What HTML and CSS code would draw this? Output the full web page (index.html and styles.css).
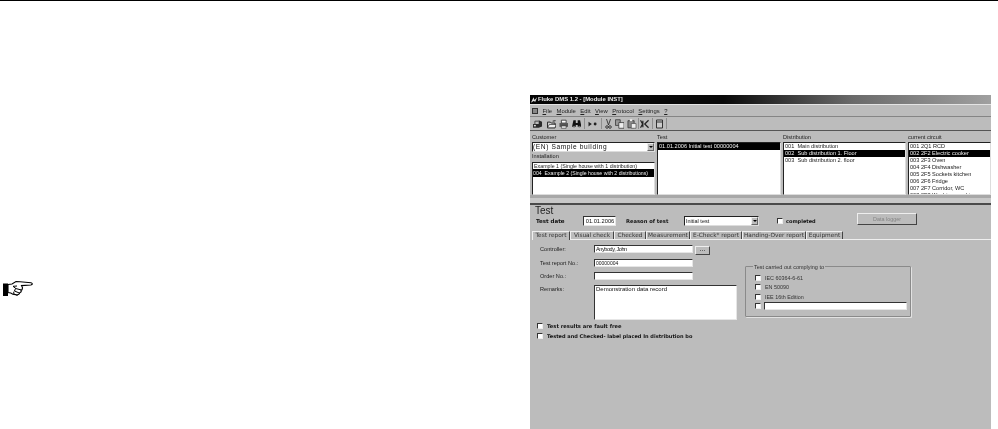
FILE: index.html
```html
<!DOCTYPE html>
<html lang="en">
<head>
<meta charset="utf-8">
<title>Fluke DMS</title>
<link rel="stylesheet" href="styles.css">
</head>
<body>
<div class="rule"></div>
<div class="page">
  <div class="margin">
    <svg class="hand" viewBox="0 0 30 17" width="30" height="17">
      <path d="M0 3.500h5v12.500H0z" fill="#000"/>
      <path d="M5 4.500l4-.5 4-2.500 4 .3 11 .9c1.800.4 1.800 2-.2 2.300l-9.300.6 1 2.200-.5 2-1 .3.200 1.700-1.400 1-1 1.400-2 .8-4-.8-2-1.200-2.800-.5z" fill="#fff" stroke="#000" stroke-width="1.100"/>
      <path d="M14 6l-4 .3 3 2.300 5.500 1.400M12.500 8.500l-1 2.500 5.500 2.300M11 11.500l-.5 2 4 2" fill="none" stroke="#000" stroke-width="1"/>
    </svg>
  </div>
  <div class="window">
    <div class="titlebar">
      <svg class="appicon" viewBox="0 0 9 8" width="8" height="8"><path d="M1 7l3-6 1 3 3-3-2 5-2-1z" fill="#ddd"/></svg>
      <span>Fluke DMS 1.2 - [Module INST]</span>
    </div>
    <div class="menubar">
      <span class="menuicon"></span>
      <span><u>F</u>ile</span><span><u>M</u>odule</span><span><u>E</u>dit</span><span><u>V</u>iew</span><span><u>P</u>rotocol</span><span><u>S</u>ettings</span><span><u>?</u></span>
    </div>
    <div class="toolbar">
      <svg class="tool" viewBox="0 0 10 10"><path d="M0 5h6v4H0zM6 1l3.500 1.500v5L6 9z" fill="#2a2a2a"/><path d="M1 6h2v1.500H1z" fill="#ddd"/><path d="M2 5V2h4" fill="none" stroke="#444"/></svg>
      <svg class="tool t-gap4" viewBox="0 0 10 10"><path d="M.5 3h3l1 1h4v5h-8z" fill="#ccc" stroke="#222"/><path d="M.5 9l2-3.500h7L8.500 9z" fill="#eee" stroke="#222" stroke-width=".7"/><path d="M6 2l3-.5" stroke="#222"/></svg>
      <svg class="tool t-gap3" viewBox="0 0 10 10"><path d="M2.500 1h5v3h-5z" fill="#fff" stroke="#222" stroke-width=".8"/><path d="M.5 4h9v4h-9z" fill="#555"/><path d="M2.500 7h5v2.500h-5z" fill="#eee" stroke="#222" stroke-width=".6"/></svg>
      <svg class="tool t-gap3" viewBox="0 0 10 10"><path d="M1.500 1h2.500v3h2V1h2.500L10 8H6V6H4v2H0z" fill="#111"/><circle cx="2.200" cy="7.800" r="1" fill="#777"/><circle cx="7.800" cy="7.800" r="1" fill="#777"/></svg>
      <i class="sep"></i>
      <svg class="tool" viewBox="0 0 10 10"><path d="M.5 2.500l3.500 2.500-3.500 2.500z" fill="#222"/><circle cx="7.500" cy="5" r="1.500" fill="#222"/></svg>
      <i class="sep"></i>
      <svg class="tool t-sm" viewBox="0 0 7 10"><path d="M1.500 0l2 6M5.500 0l-2 6" fill="none" stroke="#222" stroke-width=".8"/><circle cx="2" cy="8" r="1.300" fill="none" stroke="#222" stroke-width=".8"/><circle cx="5" cy="8" r="1.300" fill="none" stroke="#222" stroke-width=".8"/></svg>
      <svg class="tool t-gap3" viewBox="0 0 10 10"><path d="M.5 .5h5v6h-5z" fill="#999" stroke="#333" stroke-width=".8"/><path d="M4 3.500h5.500v6H4z" fill="#eee" stroke="#333" stroke-width=".8"/></svg>
      <svg class="tool t-gap3" viewBox="0 0 10 10"><path d="M1 1.500h6.500V9H1z" fill="#888" stroke="#333" stroke-width=".8"/><path d="M3 0h2.500v2H3z" fill="#eee"/><path d="M4.500 4.500h5v5h-5z" fill="#eee" stroke="#555" stroke-width=".8"/></svg>
      <i class="sep s-tight"></i>
      <svg class="tool" viewBox="0 0 10 10"><path d="M.5 1l2.200 4L.5 9M3 1.500v7M9 1L5 5l4 4" fill="none" stroke="#222" stroke-width="1.300"/></svg>
      <i class="sep"></i>
      <svg class="tool t-sm" viewBox="0 0 7 10"><path d="M.5 1h6v8h-6z" fill="#ccc" stroke="#333"/><path d="M.5 3h6" stroke="#333"/></svg>
      <i class="sep"></i>
    </div>
    <div class="selectors">
      <div class="col col-customer">
        <label>Customer</label>
        <div class="combo c-customer"><span>(EN) Sample building</span><b class="drop"></b></div>
        <label class="second">Installation</label>
        <div class="list grow">
          <div class="item tiny">Example 1 (Single house with 1 distribution)</div>
          <div class="item on tall">004&nbsp; Example 2 (Single house with 2 distributions)</div>
        </div>
      </div>
      <div class="col col-test">
        <label>Test</label>
        <div class="list grow"><div class="item on">01.01.2006 Initial test 00000004</div></div>
      </div>
      <div class="col col-dist">
        <label>Distribution</label>
        <div class="list grow">
          <div class="item">001&nbsp; Main distribution</div>
          <div class="item on">002&nbsp; Sub distribution 1. Floor</div>
          <div class="item">003&nbsp; Sub distribution 2. floor</div>
        </div>
      </div>
      <div class="col col-circuit">
        <label>current circuit</label>
        <div class="list grow">
          <div class="item">001 2Q1 RCD</div>
          <div class="item on">002 2F2 Electric cooker</div>
          <div class="item">003 2F3 Oven</div>
          <div class="item">004 2F4 Dishwasher</div>
          <div class="item">005 2F5 Sockets kitchen</div>
          <div class="item">006 2F6 Fridge</div>
          <div class="item">007 2F7 Corridor, WC</div>
          <div class="item">008 2F8 Washing machine</div>
        </div>
      </div>
    </div>
    <div class="divider"></div>
    <div class="module">
      <h1>Test</h1>
      <div class="testline">
        <strong class="l-date">Test date</strong>
        <div class="field f-date">01.01.2006</div>
        <strong class="l-reason">Reason of test</strong>
        <div class="combo f-reason"><span>Initial test</span><b class="drop"></b></div>
        <span class="check c-completed"></span>
        <strong class="l-completed">completed</strong>
        <div class="logger">Data logger</div>
      </div>
      <div class="tabs">
        <span class="tab active t1">Test report</span>
        <span class="tab t2">Visual check</span>
        <span class="tab t3">Checked</span>
        <span class="tab t4">Measurement</span>
        <span class="tab t5">E-Check* report</span>
        <span class="tab t6">Handing-Over report</span>
        <span class="tab t7">Equipment</span>
      </div>
      <div class="report">
        <div class="formcol">
          <div class="formrow"><label>Controller:</label><div class="field wide name">Anybody, John</div><div class="dots">...</div></div>
          <div class="formrow"><label>Test report No.:</label><div class="field wide num">00000004</div></div>
          <div class="formrow"><label>Order No.:</label><div class="field wide"></div></div>
          <div class="formrow last"><label>Remarks:</label><div class="field area">Demonstration data record</div></div>
          <div class="optline"><span class="check"></span><strong>Test results are fault free</strong></div>
          <div class="optline"><span class="check"></span><strong class="narrow">Tested and Checked- label placed In distribution bo</strong></div>
        </div>
        <fieldset class="comply">
          <legend>Test carried out complying to</legend>
          <div class="cline"><span class="check"></span><span>IEC 60364-6-61</span></div>
          <div class="cline"><span class="check"></span><span>EN 50090</span></div>
          <div class="cline"><span class="check"></span><span>IEE 16th Edition</span></div>
          <div class="cline"><span class="check"></span><div class="field other"></div></div>
        </fieldset>
      </div>
    </div>
  </div>
</div>
</body>
</html>
```
FILE: styles.css
```css
* { box-sizing: border-box; }
html, body { margin: 0; padding: 0; background: #fff; height: 429px; overflow: hidden; }
body { font-family: "Liberation Sans", Arial, sans-serif; color: #111; }
.rule { height: 1px; background: #000; }
.page { display: flex; height: 428px; }
.margin { width: 530px; flex: none; padding: 279px 0 0 3px; }
.hand { display: block; }
.window { width: 461px; flex: none; margin-top: 94px; background: #bcbcbc; display: flex; flex-direction: column; filter: blur(.3px); }
.titlebar { height: 10px; border-bottom: 1px solid #e4e4e4; background: linear-gradient(90deg, #050505 0, #0a0a0a 42%, #6a6a6a 70%, #a0a0a0 100%); color: #eee; font-weight: bold; font-size: 5.900px; line-height: 9px; display: flex; align-items: center; padding-left: 0; }
.appicon { flex: none; }
.menubar { height: 12px; display: flex; align-items: center; gap: 4.500px; padding-left: 2px; border-bottom: 1px solid #858585; font-size: 5.900px; color: #222; }
.menuicon { width: 6px; height: 6px; border: 1px solid #333; background: #888; margin-right: 0; }
.toolbar { height: 14px; display: flex; align-items: center; padding-left: 3px; border-bottom: 1px solid #555; }
.tool { width: 9.500px; height: 10px; flex: none; }
.t-gap4 { margin-left: 4px; }
.t-gap3 { margin-left: 3px; }
.t-sm { width: 7px; }
.sep { width: 1px; height: 11px; background: #8e8e8e; margin: 0 3px; flex: none; }
.s-tight { margin: 0 1px; }
.selectors { height: 72px; display: grid; grid-template-columns: 125px 126px 125px 83px; padding: 3px 0 0 2px; background: linear-gradient(180deg, #bcbcbc 0, #bcbcbc 64px, #a8a8a8 64px, #a8a8a8 67px, #c8c8c8 67px, #c8c8c8 100%); }
.col { display: flex; flex-direction: column; height: 61px; padding-right: 2px; }
.col-circuit { padding-right: 0; }
.col label { height: 8px; line-height: 7px; font-size: 5.600px; color: #222; }
.col .second { height: 9px; line-height: 8px; margin-bottom: 1px; }
.combo { height: 10px; flex: none; background: #fff; border: 1px solid #222; border-right-color: #ddd; border-bottom-color: #ddd; display: flex; align-items: center; justify-content: space-between; padding-left: 1px; line-height: 8px; white-space: nowrap; overflow: hidden; }
.c-customer { font-size: 6.600px; letter-spacing: .6px; padding-left: 0; }
.drop { width: 7px; height: 8px; flex: none; background: #bcbcbc; border: 1px solid #666; border-top-color: #eee; border-left-color: #eee; position: relative; }
.drop::after { content: ""; position: absolute; left: 1px; top: 2px; border: 2px solid transparent; border-top: 2px solid #000; border-bottom: 0; }
.list { background: #fff; border: 1px solid #222; border-right-color: #ddd; border-bottom-color: #ddd; overflow: hidden; }
.grow { flex: 1; min-height: 0; }
.item { height: 7px; line-height: 7px; font-size: 5.600px; padding-left: 1px; white-space: nowrap; overflow: hidden; color: #222; }
.item.tiny { font-size: 5.300px; height: 6px; line-height: 6px; }
.item.tall { height: 8px; line-height: 8px; font-size: 5.200px; padding-left: 0; }
.item.on { background: #000; color: #eee; }
.divider { height: 2px; background: #4a4a4a; }
.module { flex: 1; padding: 0 0 0 2px; background: #bcbcbc; }
h1 { margin: 1px 0 0 3px; font-size: 10px; line-height: 10px; font-weight: normal; color: #222; }
.testline { display: flex; align-items: center; height: 10px; margin-left: 4px; }
strong { font-family: "DejaVu Sans", Verdana, sans-serif; font-weight: bold; font-size: 5.200px; white-space: nowrap; color: #111; }
.narrow { font-size: 5.030px; }
.field { background: #fff; border: 1px solid #333; border-right-color: #e6e6e6; border-bottom-color: #e6e6e6; font-size: 5.500px; line-height: 6px; white-space: nowrap; padding-left: 1px; }
.l-date { width: 47px; font-size: 5.500px; }
.f-date { width: 33px; height: 10px; flex: none; text-align: center; font-size: 5.700px; line-height: 8px; }
.l-reason { margin-left: 10px; width: 58px; }
.f-reason { width: 75px; font-size: 5.500px; }
.check { width: 6px; height: 6px; flex: none; background: #fff; border: 1px solid #333; border-right-color: #eee; border-bottom-color: #eee; }
.c-completed { margin-left: 18px; }
.l-completed { margin-left: 3px; width: 71px; font-size: 5px; }
.logger { width: 60px; height: 12px; flex: none; align-self: flex-start; margin-top: -3px; background: #bcbcbc; border: 1px solid #eee; border-right-color: #444; border-bottom-color: #444; text-align: center; font-size: 5.400px; line-height: 10px; color: #858585; }
.tabs { display: flex; height: 9px; margin-top: 5px; border-bottom: 1px solid #efefef; }
.tab { height: 8px; line-height: 7px; text-align: center; font-family: "DejaVu Sans", sans-serif; font-size: 5.800px; color: #333; background: #bcbcbc; border-top: 1px solid #eee; border-left: 1px solid #eee; border-right: 1px solid #444; white-space: nowrap; overflow: hidden; }
.tab.active { height: 9px; position: relative; z-index: 1; }
.t1 { width: 38px; } .t2 { width: 44px; } .t3 { width: 32px; } .t4 { width: 44px; } .t5 { width: 52px; } .t6 { width: 64px; } .t7 { width: 37px; }
.report { display: flex; padding: 5px 0 0 0; }
.formcol { width: 213px; flex: none; padding-left: 8px; }
.formrow { display: flex; align-items: flex-start; margin-bottom: 4px; }
.formrow.last { margin-bottom: 1px; }
.formrow label { width: 54px; flex: none; font-size: 5.600px; line-height: 9px; color: #222; }
.wide { width: 99px; height: 8px; }
.name { font-size: 5.500px; letter-spacing: -.4px; }
.num { font-size: 5px; }
.dots { width: 15px; height: 9px; margin-left: 2px; margin-top: 1px; border: 1px solid #eee; border-right-color: #444; border-bottom-color: #444; font-size: 7px; line-height: 4px; text-align: center; }
.area { width: 143px; height: 35px; flex: none; font-size: 6px; line-height: 7px; }
.optline { display: flex; align-items: center; gap: 4px; height: 10px; margin-left: -3px; }
.comply { width: 166px; height: 51px; margin: 21px 0 0 0; padding: 6px 0 0 9px; border: 1px solid #8a8a8a; border-radius: 1px; box-shadow: 1px 1px 0 #e2e2e2; min-width: 0; position: relative; }
.comply legend { position: absolute; left: 7px; top: -4px; padding: 0 1px; background: #bcbcbc; font-size: 5.500px; line-height: 8px; color: #333; }
.cline { display: flex; align-items: center; gap: 4px; height: 9.500px; font-size: 5.400px; color: #333; }
.other { width: 143px; height: 8px; margin-left: -1px; }
```
